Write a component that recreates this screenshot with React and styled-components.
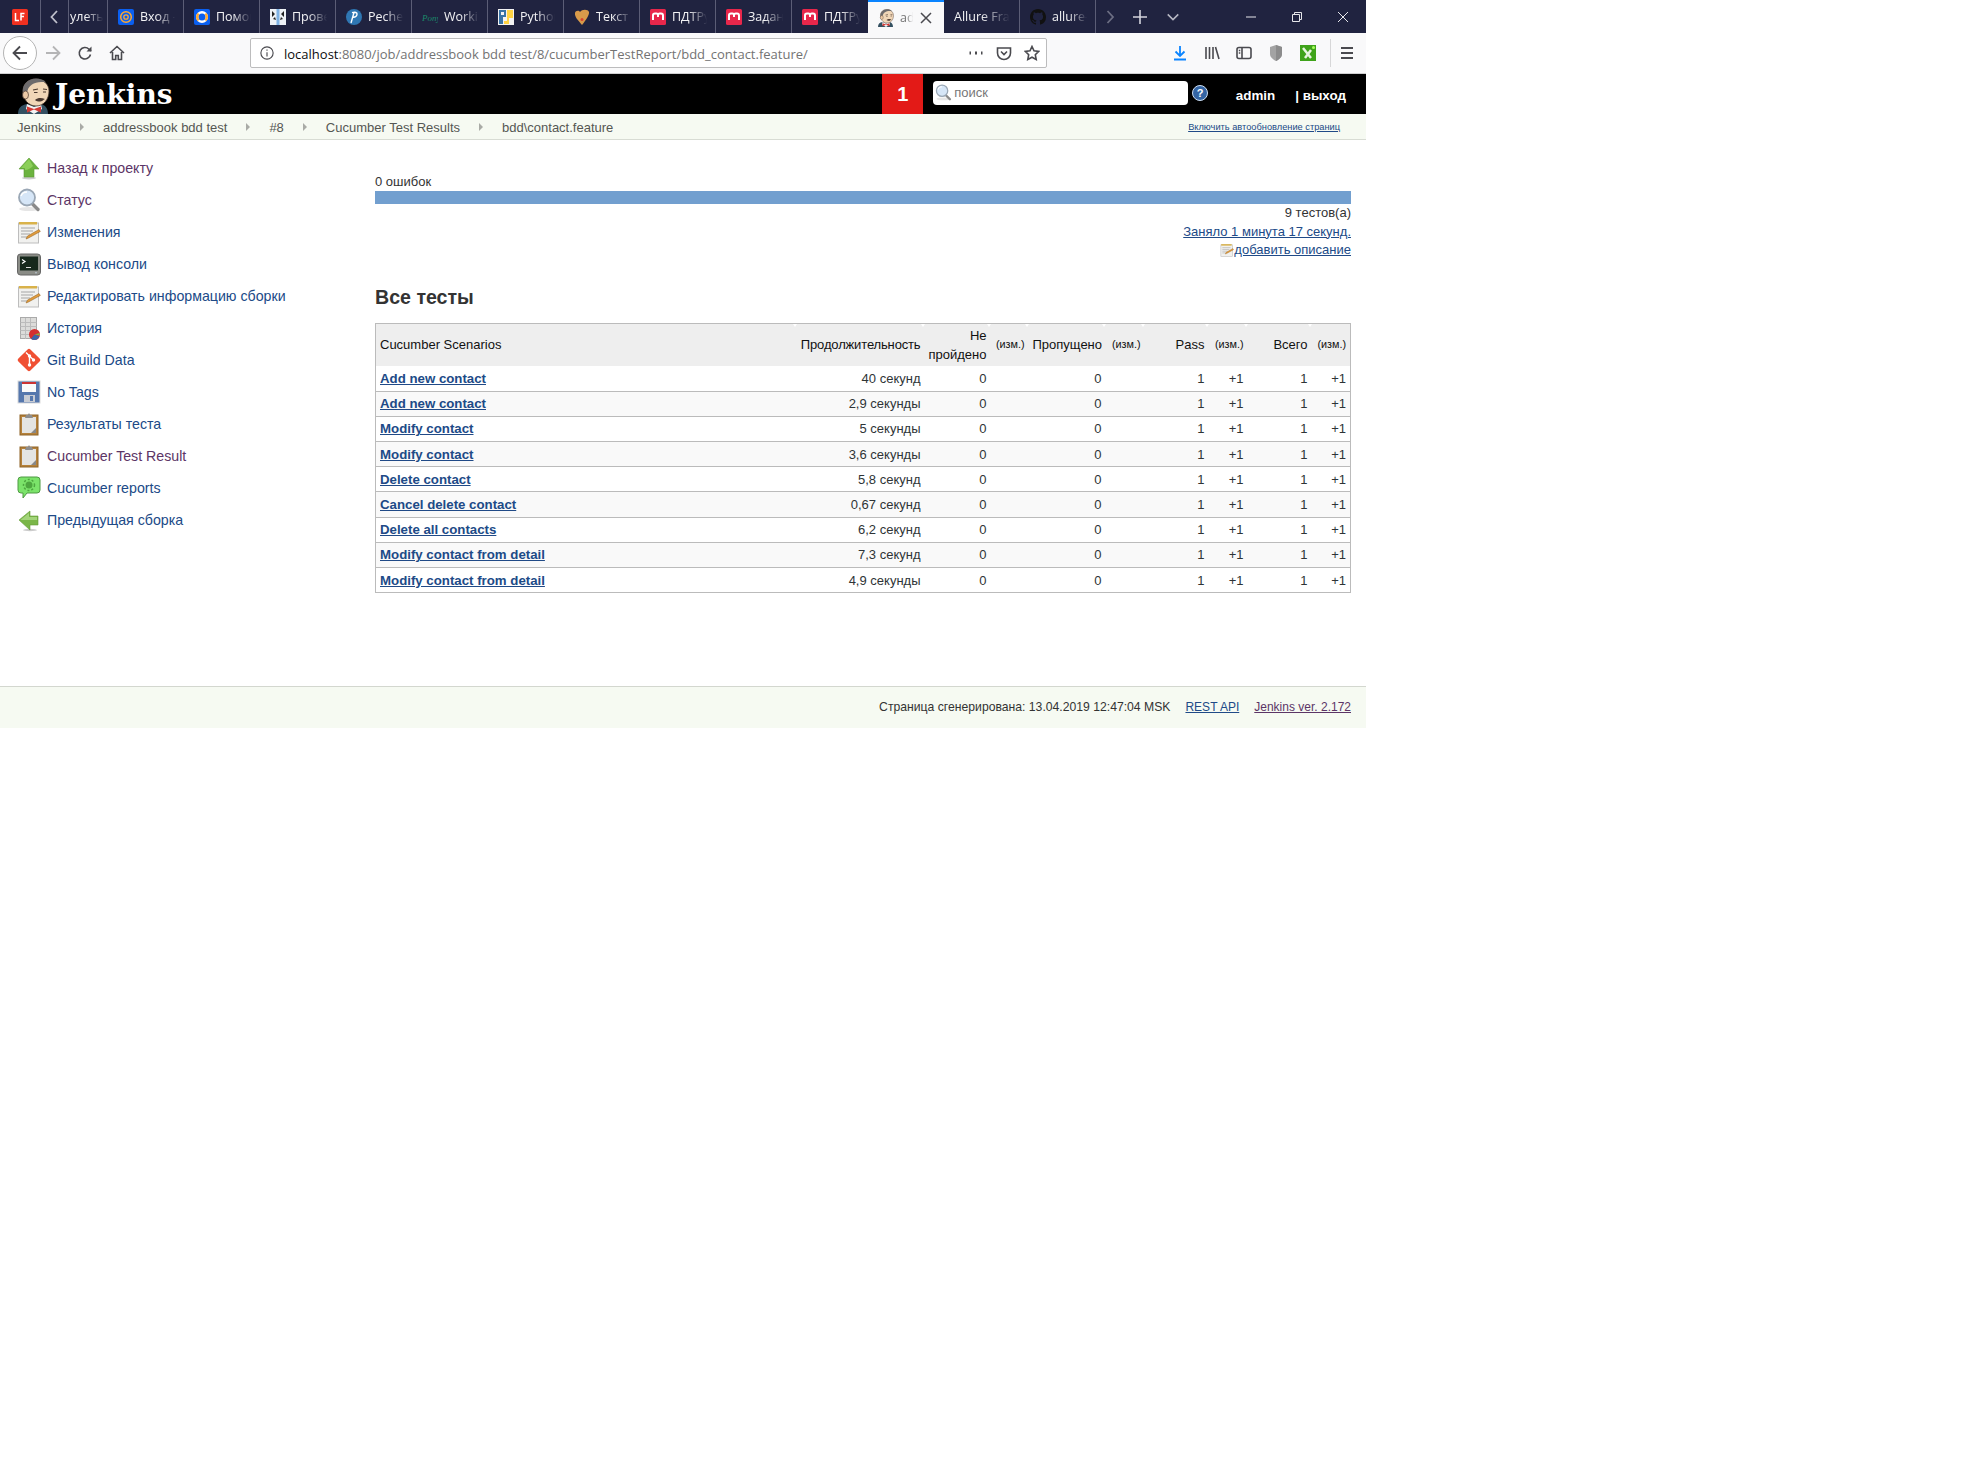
import React from "react";
import styled, { createGlobalStyle } from "styled-components";

const GlobalStyle = createGlobalStyle`
  html, body { margin: 0; padding: 0; background: #fff; }
  body { font-family: "Liberation Sans", Arial, sans-serif; font-size: 13px; color: #333; }
`;

const BLUE = "#204a87";
const PURPLE = "#5c3566";

/* ---------- small drawings ---------- */

const MIcon = () => (
  <svg width="16" height="16" viewBox="0 0 16 16">
    <rect width="16" height="16" rx="1.5" fill="#e8274b" />
    <path d="M3 11V6.2C3 5 4 4.5 5 4.5h1.4C7.3 4.5 8 5 8 6v2M8 6.2c0-1 .8-1.7 1.8-1.7H11c1.2 0 2 .8 2 1.9V11" fill="none" stroke="#fff" strokeWidth="2" />
  </svg>
);

const Butler = ({ w = 16, h = 18 }) => (
  <svg width={w} height={h} viewBox="0 0 32 36">
    <path d="M0 36c0-6 3-9 9-10l7 2 7-2c4 1 7 4 7 10z" fill="#335061" />
    <path d="M9 26l7 3 7-3 1 5-8 5-8-5z" fill="#f4f4f4" />
    <path d="M9 28.5l7 2.500 7-2.500v6l-7-3-7 3z" fill="#d33833" />
    <path d="M5 13C5 5 11 1 18 1c7 0 13 5 13 12 0 8-5 15-13 15C10 28 5 21 5 13z" fill="#f0d6b7" stroke="#49382f" strokeWidth=".8" />
    <path d="M5 16C3 7 10 .5 18 .5c4 0 8 1 10 4-6-1-11 0-14 2-3 2-5 5-5 9.500z" fill="#6d6b6d" />
    <ellipse cx="7.5" cy="17" rx="3" ry="4" fill="#ecc9a5" stroke="#49382f" strokeWidth=".7" />
    <path d="M15 12l5-1M25 11l4 .5M16 14.500h3.500M25 14h3" stroke="#49382f" strokeWidth="1.100" fill="none" />
    <path d="M17 22c3-2.500 6-2.500 10-1-2 1-3 2.500-5 2.500-2 0-4-.5-5-1.500z" fill="#49382f" />
  </svg>
);

const Favicon = ({ kind }) => {
  switch (kind) {
    case "mail":
      return (
        <svg width="16" height="16" viewBox="0 0 16 16">
          <rect width="16" height="16" rx="2" fill="#0a5ff0" />
          <circle cx="8" cy="8" r="5.3" fill="none" stroke="#ffa930" strokeWidth="1.500" />
          <circle cx="8" cy="8" r="2.2" fill="none" stroke="#ffa930" strokeWidth="1.300" />
        </svg>
      );
    case "help":
      return (
        <svg width="16" height="16" viewBox="0 0 16 16">
          <rect width="16" height="16" rx="2" fill="#0a5ff0" />
          <circle cx="8" cy="8" r="4.8" fill="none" stroke="#fff" strokeWidth="2.400" />
          <path d="M11.4 4.600a4.8 4.8 0 0 1 0 6.800M4.6 11.400a4.8 4.8 0 0 1 0-6.800" fill="none" stroke="#ffa930" strokeWidth="2.400" />
        </svg>
      );
    case "check":
      return (
        <svg width="16" height="16" viewBox="0 0 16 16">
          <rect width="16" height="16" fill="#eef2f6" />
          <rect x="6.5" width="3" height="16" fill="#7fb2e4" />
          <path d="M2 2l3 3-3 3zM14 2l-3 3 3 3zM3 10l2-2 1 3zM13 10l-2-2-1 3z" fill="#222" />
        </svg>
      );
    case "pecher":
      return (
        <svg width="16" height="16" viewBox="0 0 16 16">
          <circle cx="8" cy="8" r="8" fill="#2f77b3" />
          <path d="M5 14L8 3.500M6 3.700c3-.9 5.500-.4 5 2-.4 1.900-2.500 2.700-4.500 2.500" fill="none" stroke="#fff" strokeWidth="1.400" />
        </svg>
      );
    case "pony":
      return (
        <svg width="16" height="16" viewBox="0 0 16 16">
          <text x="0" y="12" fontFamily="Liberation Serif" fontStyle="italic" fontSize="9" fill="#1b8a6b">Pony</text>
        </svg>
      );
    case "python":
      return (
        <svg width="16" height="16" viewBox="0 0 16 16">
          <rect width="16" height="16" fill="#f2f2f2" />
          <path d="M1 1h7v7H5v7H1z" fill="#3973a5" />
          <path d="M9 1h6v8h-4v6H6v-3h3V9h0V1z" fill="#ffd343" />
          <rect x="3" y="3" width="3" height="3" fill="#f2f2f2" />
        </svg>
      );
    case "heart":
      return (
        <svg width="16" height="16" viewBox="0 0 16 16">
          <path d="M8 16C4 11 .5 8 1 4c.4-2.500 4-3 5-1 2-3 8-3 9 0 .5 3-3 8-7 13z" fill="#d89a4a" />
          <circle cx="8" cy="10.5" r="1.500" fill="#d8432f" />
        </svg>
      );
    case "github":
      return (
        <svg width="16" height="16" viewBox="0 0 16 16">
          <path fill="#111" d="M8 0C3.580 0 0 3.580 0 8c0 3.540 2.290 6.530 5.470 7.590.4.070.55-.17.55-.38 0-.19-.01-.82-.01-1.490-2.010.37-2.530-.49-2.690-.94-.09-.23-.48-.94-.82-1.130-.28-.15-.68-.52-.01-.53.630-.01 1.080.58 1.230.82.720 1.210 1.870.87 2.330.66.070-.52.280-.87.510-1.070-1.780-.2-3.640-.89-3.640-3.950 0-.87.310-1.590.82-2.150-.08-.2-.36-1.020.08-2.120 0 0 .67-.21 2.200.82.640-.18 1.320-.27 2-.27s1.360.09 2 .27c1.530-1.040 2.200-.82 2.200-.82.440 1.100.16 1.920.08 2.120.51.560.82 1.270.82 2.150 0 3.070-1.870 3.750-3.650 3.950.29.250.54.730.54 1.480 0 1.070-.01 1.930-.01 2.200 0 .21.150.46.550.38A8.010 8.010 0 0 0 16 8c0-4.420-3.580-8-8-8z" />
        </svg>
      );
    case "m":
      return <MIcon />;
    case "jenkins":
      return <Butler />;
    default:
      return null;
  }
};

const LfIcon = () => (
  <svg width="16" height="16" viewBox="0 0 16 16">
    <rect width="16" height="16" rx="1.5" fill="#f03020" />
    <path d="M3.5 4v7.500h3.500M9 11.500V4.500h3.500M9 7.500h3" fill="none" stroke="#fff" strokeWidth="1.500" />
  </svg>
);

const Stroke = ({ children, w = 16, h = 16, color = "#4a4a4f", sw = 1.6, box = "0 0 16 16" }) => (
  <svg width={w} height={h} viewBox={box} fill="none" stroke={color} strokeWidth={sw}>
    {children}
  </svg>
);

const ArrowUpIcon = () => (
  <svg width="24" height="24" viewBox="0 0 24 24">
    <ellipse cx="12" cy="22" rx="7" ry="1.5" fill="#ccc" />
    <path d="M12 2l10 11h-5v8H7v-8H2z" fill="#6cb33f" stroke="#5b9c33" strokeWidth=".6" />
    <path d="M12 3L4 12h4v2c3 0 6-2 8-4z" fill="#8ccf5a" />
  </svg>
);

const ArrowLeftIcon = () => (
  <svg width="24" height="24" viewBox="0 0 24 24">
    <ellipse cx="13" cy="22" rx="7" ry="1.2" fill="#ccc" />
    <path d="M2 12L13 3v5h8v9h-8v5z" fill="#7ab648" stroke="#679c3b" strokeWidth=".6" />
    <path d="M3.5 12L12 5v4h8v3H8z" fill="#a3d47a" />
  </svg>
);

const SearchIcon = ({ size = 24 }) => (
  <svg width={size} height={size} viewBox="0 0 24 24">
    <ellipse cx="12" cy="21" rx="10" ry="2" fill="#e6e6e6" />
    <path d="M15 15.500l6 6" stroke="#8a8a8a" strokeWidth="3.400" strokeLinecap="round" />
    <circle cx="10" cy="9.500" r="8" fill="#d6e6f7" stroke="#9aa7b5" strokeWidth="1.800" />
    <path d="M4 8c1-3 3.500-4 6-4" stroke="#fff" strokeWidth="1.500" fill="none" />
  </svg>
);

const NotepadIcon = ({ size = 24 }) => (
  <svg width={size} height={size} viewBox="0 0 24 24">
    <rect x="1.5" y="3" width="20" height="20" fill="#f1f1ef" stroke="#bdbdbd" />
    <rect x="2" y="2" width="18" height="2.500" fill="#d9b24a" />
    <path d="M4 8h14M4 11h12M4 14h9M4 17h6" stroke="#a5a5a5" />
    <path d="M9 19l1.500-3L22 9.500l1.300 2L11.500 18z" fill="#e09b3d" stroke="#8f5f1d" strokeWidth=".5" />
  </svg>
);

const TerminalIcon = () => (
  <svg width="24" height="24" viewBox="0 0 24 24">
    <rect x=".5" y="2" width="23" height="21" rx="3" fill="#8a8c86" stroke="#666" />
    <rect x="3" y="4.500" width="18" height="14" fill="#16281c" />
    <path d="M5 7.500l3 2-3 2" fill="none" stroke="#fff" strokeWidth="1.200" />
    <path d="M9 15.500h5" stroke="#ddd" />
    <circle cx="19" cy="20.800" r=".7" fill="#cde" />
  </svg>
);

const HistoryIcon = () => (
  <svg width="24" height="24" viewBox="0 0 24 24">
    <rect x="3.5" y="1.500" width="16" height="21" fill="#dcdcda" stroke="#aaa" />
    <path d="M3.500 6.500h16M3.500 10.500h16M3.500 14.500h16M3.500 18.500h16M8.500 2v21M13.500 2v21" stroke="#bcbcbc" />
    <circle cx="17.500" cy="18.500" r="5.500" fill="#d32f2f" />
    <path d="M17.500 18.500l5 2a5.500 5.500 0 0 1-8.500 2.200z" fill="#3a65a8" />
    <path d="M17.500 18.500l5-1.500.2 2.500z" fill="#7fb24a" />
  </svg>
);

const GitIcon = () => (
  <svg width="24" height="24" viewBox="0 0 24 24">
    <rect x="3.500" y="3.500" width="17" height="17" rx="2" transform="rotate(45 12 12)" fill="#f05033" />
    <path d="M9 4.500l3.500 3.500v9M12.500 8l4 4" stroke="#fff" strokeWidth="1.400" fill="none" />
    <circle cx="12.5" cy="8" r="1.700" fill="#fff" />
    <circle cx="12.5" cy="17" r="1.700" fill="#fff" />
    <circle cx="16.5" cy="12" r="1.700" fill="#fff" />
  </svg>
);

const FloppyIcon = () => (
  <svg width="24" height="24" viewBox="0 0 24 24">
    <rect x="1" y="1" width="22" height="22" fill="#5577ad" stroke="#dcdcdc" />
    <rect x="5" y="2" width="14" height="10" fill="#fafafa" />
    <rect x="5" y="2" width="14" height="2" fill="#cc3333" />
    <rect x="7" y="15" width="11" height="7" fill="#c8ccd4" />
    <rect x="13" y="16" width="3" height="5" fill="#5577ad" />
  </svg>
);

const ClipboardIcon = () => (
  <svg width="24" height="24" viewBox="0 0 24 24">
    <rect x="3" y="3" width="18" height="20" fill="#b5813a" stroke="#8f6428" />
    <rect x="5" y="5" width="14" height="16" fill="#e4e4e2" />
    <path d="M14 21l5-5v5z" fill="#888" />
    <path d="M8 6l1-3h2l.5-1.500h1L13 3h2l1 3z" fill="#8d8d8d" />
  </svg>
);

const BubbleIcon = () => (
  <svg width="24" height="24" viewBox="0 0 24 24">
    <path d="M4 1h16a3 3 0 0 1 3 3v10a3 3 0 0 1-3 3H10l-4 5v-5H4a3 3 0 0 1-3-3V4a3 3 0 0 1 3-3z" fill="#7be36a" stroke="#4f9a43" />
    <circle cx="12" cy="9" r="3.500" fill="#4da63f" />
    <circle cx="12" cy="9" r="5.500" fill="none" stroke="#4da63f" strokeWidth="1.500" strokeDasharray="2 2" />
  </svg>
);

const HelpIcon = () => (
  <svg width="16" height="16" viewBox="0 0 16 16">
    <circle cx="8" cy="8" r="7.5" fill="#3465a4" stroke="#cfe0f5" />
    <text x="8" y="12" textAnchor="middle" fontFamily="Liberation Sans" fontWeight="700" fontSize="11" fill="#fff">?</text>
  </svg>
);

/* ---------- browser chrome ---------- */

const TabBar = styled.div`
  display: flex;
  align-items: stretch;
  height: 33px;
  background: #202340;
  overflow: hidden;
`;

const StripCell = styled.div`
  display: flex;
  align-items: center;
  justify-content: center;
  width: ${(p) => p.$w}px;
  flex: none;
  border-right: ${(p) => (p.$line ? "1px solid #5b5d76" : "none")};
  box-sizing: border-box;
`;

const Tab = styled.div`
  display: flex;
  align-items: center;
  gap: 6px;
  width: ${(p) => p.$w || 76}px;
  flex: none;
  box-sizing: border-box;
  padding: ${(p) => (p.$active ? "0 12px 0 10px" : p.$bare ? "0 2px 0 1px" : "0 6px 0 10px")};
  background: ${(p) => (p.$active ? "#f9f9fa" : "transparent")};
  border-right: ${(p) => (p.$active || p.$beforeActive ? "none" : "1px solid #5b5d76")};
  border-top: ${(p) => (p.$active ? "2px solid #0a84ff" : "none")};
  color: ${(p) => (p.$active ? "#737373" : "#f3f3f5")};
  font-family: "Open Sans", "Noto Sans", sans-serif;
  font-size: 12.5px;
  white-space: nowrap;
`;

const TabTitle = styled.span`
  flex: 1;
  overflow: hidden;
  -webkit-mask-image: linear-gradient(90deg, #000 45%, transparent 95%);
  mask-image: linear-gradient(90deg, #000 45%, transparent 95%);
`;

const WindowButtons = styled.div`
  display: flex;
  margin-left: auto;
`;

const NavBar = styled.div`
  display: flex;
  align-items: center;
  height: 41px;
  padding-left: 3px;
  background: #f9f9fa;
  border-bottom: 1px solid #cfcfd0;
  box-sizing: border-box;
`;

const BackButton = styled.div`
  display: flex;
  align-items: center;
  justify-content: center;
  width: 34px;
  height: 34px;
  flex: none;
  box-sizing: border-box;
  border: 1px solid #b4b4b4;
  border-radius: 50%;
  background: #fff;
`;

const NavButton = styled.div`
  display: flex;
  align-items: center;
  justify-content: center;
  width: 32px;
  flex: none;
`;

const UrlBar = styled.div`
  display: flex;
  align-items: center;
  width: 797px;
  height: 30px;
  margin-left: 117px;
  flex: none;
  box-sizing: border-box;
  padding: 0 0 0 9px;
  background: #fff;
  border: 1px solid #bcbcbd;
  border-radius: 2px;
`;

const UrlText = styled.div`
  flex: 1;
  margin-left: 10px;
  padding-top: 1px;
  font-family: "Open Sans", "Noto Sans", sans-serif;
  font-size: 13px;
  color: #737373;
  white-space: nowrap;
  span { color: #0c0c0d; }
`;

const UrlAction = styled.div`
  display: flex;
  align-items: center;
  justify-content: center;
  width: 28px;
  flex: none;
`;

const ToolGroup = styled.div`
  display: flex;
  align-items: center;
  margin-left: 117px;
`;

const ToolDivider = styled.div`
  width: 1px;
  height: 28px;
  margin: 0 8px 0 6px;
  background: #d7d7d8;
`;

/* ---------- jenkins header ---------- */

const Header = styled.header`
  display: flex;
  align-items: stretch;
  height: 40px;
  background: #000;
  color: #fff;
`;

const Logo = styled.div`
  display: flex;
  align-items: flex-end;
  gap: 5px;
  padding-left: 18px;
  overflow: hidden;
`;

const LogoTitle = styled.div`
  align-self: center;
  font-family: "DejaVu Serif", "Liberation Serif", serif;
  font-weight: 700;
  font-size: 28px;
  color: #fff;
`;

const Badge = styled.div`
  display: flex;
  align-items: center;
  justify-content: center;
  width: 41px;
  margin-left: auto;
  background: #e31a17;
  font-size: 20px;
  font-weight: 700;
`;

const SearchBox = styled.div`
  display: flex;
  align-items: center;
  gap: 2px;
  align-self: center;
  width: 255px;
  height: 24px;
  margin: -3px 0 0 10px;
  padding-left: 2px;
  box-sizing: border-box;
  background: #fff;
  border-radius: 4px;
  color: #777;
  font-size: 13px;
`;

const HelpSlot = styled.div`
  display: flex;
  align-self: center;
  margin: -2px 0 0 4px;
`;

const UserLink = styled.span`
  align-self: center;
  margin: 2px ${(p) => p.$end || 0}px 0 ${(p) => p.$gap}px;
  font-size: 13.4px;
  font-weight: 700;
  white-space: nowrap;
  color: #fff;
`;

/* ---------- breadcrumbs ---------- */

const Breadcrumbs = styled.nav`
  display: flex;
  align-items: center;
  height: 24px;
  padding: 1px 20px 0 17px;
  background: #f6faf2;
  border-bottom: 1px solid #d8dcd4;
  color: #555753;
`;

const Crumb = styled.span`
  font-size: 13px;
  white-space: nowrap;
`;

const CrumbArrow = styled.span`
  display: flex;
  justify-content: center;
  width: 42px;
  flex: none;
  &::before {
    content: "";
    border-left: 4px solid #a9aba6;
    border-top: 4px solid transparent;
    border-bottom: 4px solid transparent;
  }
`;

const AutoRefresh = styled.a`
  margin-left: auto;
  margin-right: 6px;
  font-size: 9.25px;
  color: ${BLUE};
  text-decoration: underline;
`;

/* ---------- page body ---------- */

const Columns = styled.div`
  display: flex;
  width: 1366px;
`;

const Sidebar = styled.aside`
  width: 375px;
  flex: none;
  box-sizing: border-box;
  padding: 12px 0 0 17px;
`;

const SideItem = styled.a`
  display: flex;
  align-items: center;
  gap: 5px;
  height: 32px;
  font-size: 14.2px;
  color: ${(p) => (p.$visited ? PURPLE : BLUE)};
`;

const SideIcon = styled.span`
  display: flex;
  width: 25px;
  flex: none;
`;

const Main = styled.main`
  width: 976px;
  flex: none;
  padding-top: 33px;
  font-size: 13px;
`;

const FailCount = styled.div`
  line-height: 17px;
`;

const ProgressBar = styled.div`
  height: 13px;
  margin-top: 1px;
  background: #729fcf;
`;

const Summary = styled.div`
  display: flex;
  flex-direction: column;
  align-items: flex-end;
  gap: 3px;
  margin-top: 1px;
  line-height: 15.5px;
`;

const PlainLink = styled.a`
  display: inline-flex;
  align-items: center;
  color: ${BLUE};
  text-decoration: underline;
`;

const Heading = styled.h1`
  margin: 26px 0 13px;
  font-size: 19.6px;
  line-height: 26px;
  font-weight: 700;
  color: #333;
`;

const Table = styled.table`
  width: 975px;
  table-layout: fixed;
  border-collapse: collapse;
  border: 1px solid #bbb;
  color: #2e3436;
`;

const Col = styled.col`
  width: ${(p) => p.$w}px;
`;

const Th = styled.th`
  position: relative;
  height: 43px;
  padding: 0 4px;
  box-sizing: border-box;
  background: #eee;
  font-weight: 400;
  font-size: ${(p) => (p.$small ? 10.8 : 13)}px;
  letter-spacing: ${(p) => (p.$tight ? "-0.15px" : "normal")};
  line-height: 19px;
  text-align: ${(p) => (p.$left ? "left" : "right")};
  color: #111;
  &:not(:last-child)::after {
    content: "";
    position: absolute;
    top: 0;
    right: 0;
    border-top: 3px solid #fff;
    border-left: 2px solid transparent;
    border-right: 2px solid transparent;
  }
`;

const Td = styled.td`
  height: 25.2px;
  padding: 0 4px;
  box-sizing: border-box;
  border-bottom: 1px solid #bbb;
  text-align: ${(p) => (p.$left ? "left" : "right")};
  white-space: nowrap;
`;

const Row = styled.tr`
  background: ${(p) => (p.$odd ? "#f9f9f9" : "#fff")};
`;

const RowLink = styled.a`
  font-weight: 700;
  font-size: 13.25px;
  color: ${BLUE};
  text-decoration: underline;
`;

const Footer = styled.footer`
  display: flex;
  align-items: center;
  justify-content: flex-end;
  gap: 15px;
  width: 1366px;
  height: 42px;
  margin-top: 93px;
  padding: 0 15px 2px 0;
  box-sizing: border-box;
  background: #f6faf2;
  border-top: 1px solid #d3d7cf;
  font-size: 12px;
  color: #333;
`;

const FooterNote = styled.span`
  font-size: 12.2px;
`;

const FooterLink = styled.a`
  color: ${(p) => (p.$visited ? PURPLE : BLUE)};
  text-decoration: underline;
`;

const Page = styled.div`
  width: 1366px;
`;

/* ---------- data ---------- */

const TABS = [
  { icon: "mail", title: "Вход -" },
  { icon: "help", title: "Помощ" },
  { icon: "check", title: "Прове" },
  { icon: "pecher", title: "Pecher" },
  { icon: "pony", title: "Workin" },
  { icon: "python", title: "Python" },
  { icon: "heart", title: "Текст" },
  { icon: "m", title: "ПДТРу" },
  { icon: "m", title: "Задан" },
  { icon: "m", title: "ПДТРу", beforeActive: true },
];

const SIDE_ITEMS = [
  { icon: <ArrowUpIcon />, label: "Назад к проекту", visited: true },
  { icon: <SearchIcon />, label: "Статус", visited: true },
  { icon: <NotepadIcon />, label: "Изменения" },
  { icon: <TerminalIcon />, label: "Вывод консоли" },
  { icon: <NotepadIcon />, label: "Редактировать информацию сборки" },
  { icon: <HistoryIcon />, label: "История" },
  { icon: <GitIcon />, label: "Git Build Data" },
  { icon: <FloppyIcon />, label: "No Tags" },
  { icon: <ClipboardIcon />, label: "Результаты теста" },
  { icon: <ClipboardIcon />, label: "Cucumber Test Result", visited: true },
  { icon: <BubbleIcon />, label: "Cucumber reports" },
  { icon: <ArrowLeftIcon />, label: "Предыдущая сборка" },
];

const COLUMN_WIDTHS = [421, 128, 66, 38, 77, 39, 64, 39, 64, 39];

const HEADERS = [
  { text: "Cucumber Scenarios", left: true },
  { text: "Продолжительность", tight: true },
  { text: "Не пройдено" },
  { text: "(изм.)", small: true },
  { text: "Пропущено" },
  { text: "(изм.)", small: true },
  { text: "Pass" },
  { text: "(изм.)", small: true },
  { text: "Всего" },
  { text: "(изм.)", small: true },
];

const ROWS = [
  ["Add new contact", "40 секунд"],
  ["Add new contact", "2,9 секунды"],
  ["Modify contact", "5 секунды"],
  ["Modify contact", "3,6 секунды"],
  ["Delete contact", "5,8 секунд"],
  ["Cancel delete contact", "0,67 секунд"],
  ["Delete all contacts", "6,2 секунд"],
  ["Modify contact from detail", "7,3 секунд"],
  ["Modify contact from detail", "4,9 секунды"],
];

const CRUMBS = ["Jenkins", "addressbook bdd test", "#8", "Cucumber Test Results", "bdd\\contact.feature"];

export default function App() {
  return (
    <Page>
      <GlobalStyle />
      <TabBar>
        <StripCell $w={41} $line>
          <LfIcon />
        </StripCell>
        <StripCell $w={28} $line>
          <Stroke color="#bfc0cb" sw={1.8}><path d="M10 2L4.500 8l5.500 6" /></Stroke>
        </StripCell>
        <Tab $w={39} $bare><TabTitle>улеть</TabTitle></Tab>
        {TABS.map((tab, i) => (
          <Tab key={i} $beforeActive={tab.beforeActive}>
            <Favicon kind={tab.icon} />
            <TabTitle>{tab.title}</TabTitle>
          </Tab>
        ))}
        <Tab $active>
          <Favicon kind="jenkins" />
          <TabTitle>add</TabTitle>
          <Stroke w={12} h={12} box="0 0 12 12" color="#4a4a4f" sw={1.5}><path d="M1 1l10 10M11 1L1 11" /></Stroke>
        </Tab>
        <Tab><TabTitle>Allure Framework</TabTitle></Tab>
        <Tab>
          <Favicon kind="github" />
          <TabTitle>allure-</TabTitle>
        </Tab>
        <StripCell $w={28}>
          <Stroke color="#6c6e83" sw={1.8}><path d="M5.500 2l5.500 6-5.500 6" /></Stroke>
        </StripCell>
        <StripCell $w={32}>
          <Stroke color="#d4d4dc" sw={1.6}><path d="M8 1v14M1 8h14" /></Stroke>
        </StripCell>
        <StripCell $w={33}>
          <Stroke w={14} h={14} color="#b6b7c3" sw={1.8}><path d="M2 5l6 6 6-6" /></Stroke>
        </StripCell>
        <WindowButtons>
          <StripCell $w={46}>
            <Stroke w={12} h={12} box="0 0 12 12" color="#e6e6ea" sw={1}><path d="M1 6h10" /></Stroke>
          </StripCell>
          <StripCell $w={46}>
            <Stroke w={12} h={12} box="0 0 12 12" color="#e6e6ea" sw={1}><path d="M1.500 3.500h7v7h-7zM3.500 3.500v-2h7v7h-2" /></Stroke>
          </StripCell>
          <StripCell $w={46}>
            <Stroke w={12} h={12} box="0 0 12 12" color="#e6e6ea" sw={1}><path d="M1 1l10 10M11 1L1 11" /></Stroke>
          </StripCell>
        </WindowButtons>
      </TabBar>

      <NavBar>
        <BackButton>
          <Stroke w={18} h={18} box="0 0 18 18" sw={1.8}><path d="M16 9H2.500M9 2.500L2.500 9 9 15.500" /></Stroke>
        </BackButton>
        <NavButton>
          <Stroke w={18} h={18} box="0 0 18 18" color="#b5b5b6" sw={1.8}><path d="M2 9h13.500M9 2.500L15.500 9 9 15.500" /></Stroke>
        </NavButton>
        <NavButton>
          <Stroke><path d="M13.500 9.500a5.700 5.700 0 1 1-1.500-5.300L14 6" /><path d="M14.500 1.500V6.500H9.500" fill="#4a4a4f" stroke="none" /></Stroke>
        </NavButton>
        <NavButton>
          <Stroke><path d="M1 8l7-6.500L15 8M3.500 7v7.500h3.200v-4h2.600v4h3.200V7" /></Stroke>
        </NavButton>
        <UrlBar>
          <Stroke w={14} h={14} sw={1.3}>
            <circle cx="8" cy="8" r="7" />
            <path d="M8 7v5M8 4v1.500" />
          </Stroke>
          <UrlText><span>localhost</span>:8080/job/addressbook bdd test/8/cucumberTestReport/bdd_contact.feature/</UrlText>
          <UrlAction>
            <Stroke w={16} h={16}><path d="M1.500 8h1.500M7 8h2M13 8h1.500" strokeWidth="2.800" /></Stroke>
          </UrlAction>
          <UrlAction>
            <Stroke><path d="M1.500 3h13v5a6.500 6.500 0 0 1-13 0zM5 6.500l3 3 3-3" /></Stroke>
          </UrlAction>
          <UrlAction>
            <Stroke><path d="M8 1.500l2 4.300 4.700.6-3.400 3.300.9 4.700L8 12.200l-4.200 2.200.9-4.700L1.300 6.400 6 5.800z" /></Stroke>
          </UrlAction>
        </UrlBar>
        <ToolGroup>
          <NavButton>
            <Stroke color="#0a84ff" sw={1.8}><path d="M8 1v10M3.500 6.500L8 11l4.500-4.500M2 14.500h12" /></Stroke>
          </NavButton>
          <NavButton>
            <Stroke><path d="M2 2v12M5.500 2v12M9 2v12M11.500 2l3.500 12" /></Stroke>
          </NavButton>
          <NavButton>
            <Stroke><rect x="1" y="2.500" width="14" height="11" rx="2" /><path d="M6 2.500v11M2.800 5.500h1.500M2.800 8h1.500" /></Stroke>
          </NavButton>
          <NavButton>
            <svg width="16" height="16" viewBox="0 0 16 16">
              <path d="M8 0l6 2v7c0 3-3 5.500-6 7-3-1.500-6-4-6-7V2z" fill="#a3a3a3" />
              <path d="M8 0l6 2v7c0 3-3 5.500-6 7z" fill="#8c8c8c" />
            </svg>
          </NavButton>
          <NavButton>
            <svg width="16" height="16" viewBox="0 0 16 16">
              <rect width="16" height="16" fill="#3fa31a" />
              <path d="M3 3l8 10M11 5L5 13" stroke="#e8f5e0" strokeWidth="2.500" />
              <circle cx="13.500" cy="2.500" r="1.500" fill="#a6ff5a" />
            </svg>
          </NavButton>
          <ToolDivider />
          <Stroke w={16} h={16} sw={1.8}><path d="M2 3h12M2 8h12M2 13h12" /></Stroke>
        </ToolGroup>
      </NavBar>

      <Header>
        <Logo>
          <Butler w={32} h={36} />
          <LogoTitle>Jenkins</LogoTitle>
        </Logo>
        <Badge>1</Badge>
        <SearchBox>
          <SearchIcon size={17} />
          поиск
        </SearchBox>
        <HelpSlot><HelpIcon /></HelpSlot>
        <UserLink $gap={27.5}>admin</UserLink>
        <UserLink $gap={20} $end={20}>| выход</UserLink>
      </Header>

      <Breadcrumbs>
        {CRUMBS.map((crumb, i) => (
          <React.Fragment key={crumb}>
            {i > 0 && <CrumbArrow />}
            <Crumb>{crumb}</Crumb>
          </React.Fragment>
        ))}
        <AutoRefresh>Включить автообновление страниц</AutoRefresh>
      </Breadcrumbs>

      <Columns>
        <Sidebar>
          {SIDE_ITEMS.map((item) => (
            <SideItem key={item.label} $visited={item.visited}>
              <SideIcon>{item.icon}</SideIcon>
              {item.label}
            </SideItem>
          ))}
        </Sidebar>
        <Main>
          <FailCount>0 ошибок</FailCount>
          <ProgressBar />
          <Summary>
            <span>9 тестов(а)</span>
            <PlainLink>Заняло 1 минута 17 секунд.</PlainLink>
            <PlainLink><NotepadIcon size={14} />добавить описание</PlainLink>
          </Summary>
          <Heading>Все тесты</Heading>
          <Table>
            <colgroup>
              {COLUMN_WIDTHS.map((w, i) => (
                <Col key={i} $w={w} />
              ))}
            </colgroup>
            <thead>
              <tr>
                {HEADERS.map((h, i) => (
                  <Th key={i} $left={h.left} $small={h.small} $tight={h.tight}>{h.text}</Th>
                ))}
              </tr>
            </thead>
            <tbody>
              {ROWS.map(([name, time], i) => (
                <Row key={i} $odd={i % 2 === 1}>
                  <Td $left><RowLink>{name}</RowLink></Td>
                  <Td>{time}</Td>
                  <Td>0</Td>
                  <Td />
                  <Td>0</Td>
                  <Td />
                  <Td>1</Td>
                  <Td>+1</Td>
                  <Td>1</Td>
                  <Td>+1</Td>
                </Row>
              ))}
            </tbody>
          </Table>
        </Main>
      </Columns>

      <Footer>
        <FooterNote>Страница сгенерирована: 13.04.2019 12:47:04 MSK</FooterNote>
        <FooterLink>REST API</FooterLink>
        <FooterLink $visited>Jenkins ver. 2.172</FooterLink>
      </Footer>
    </Page>
  );
}
